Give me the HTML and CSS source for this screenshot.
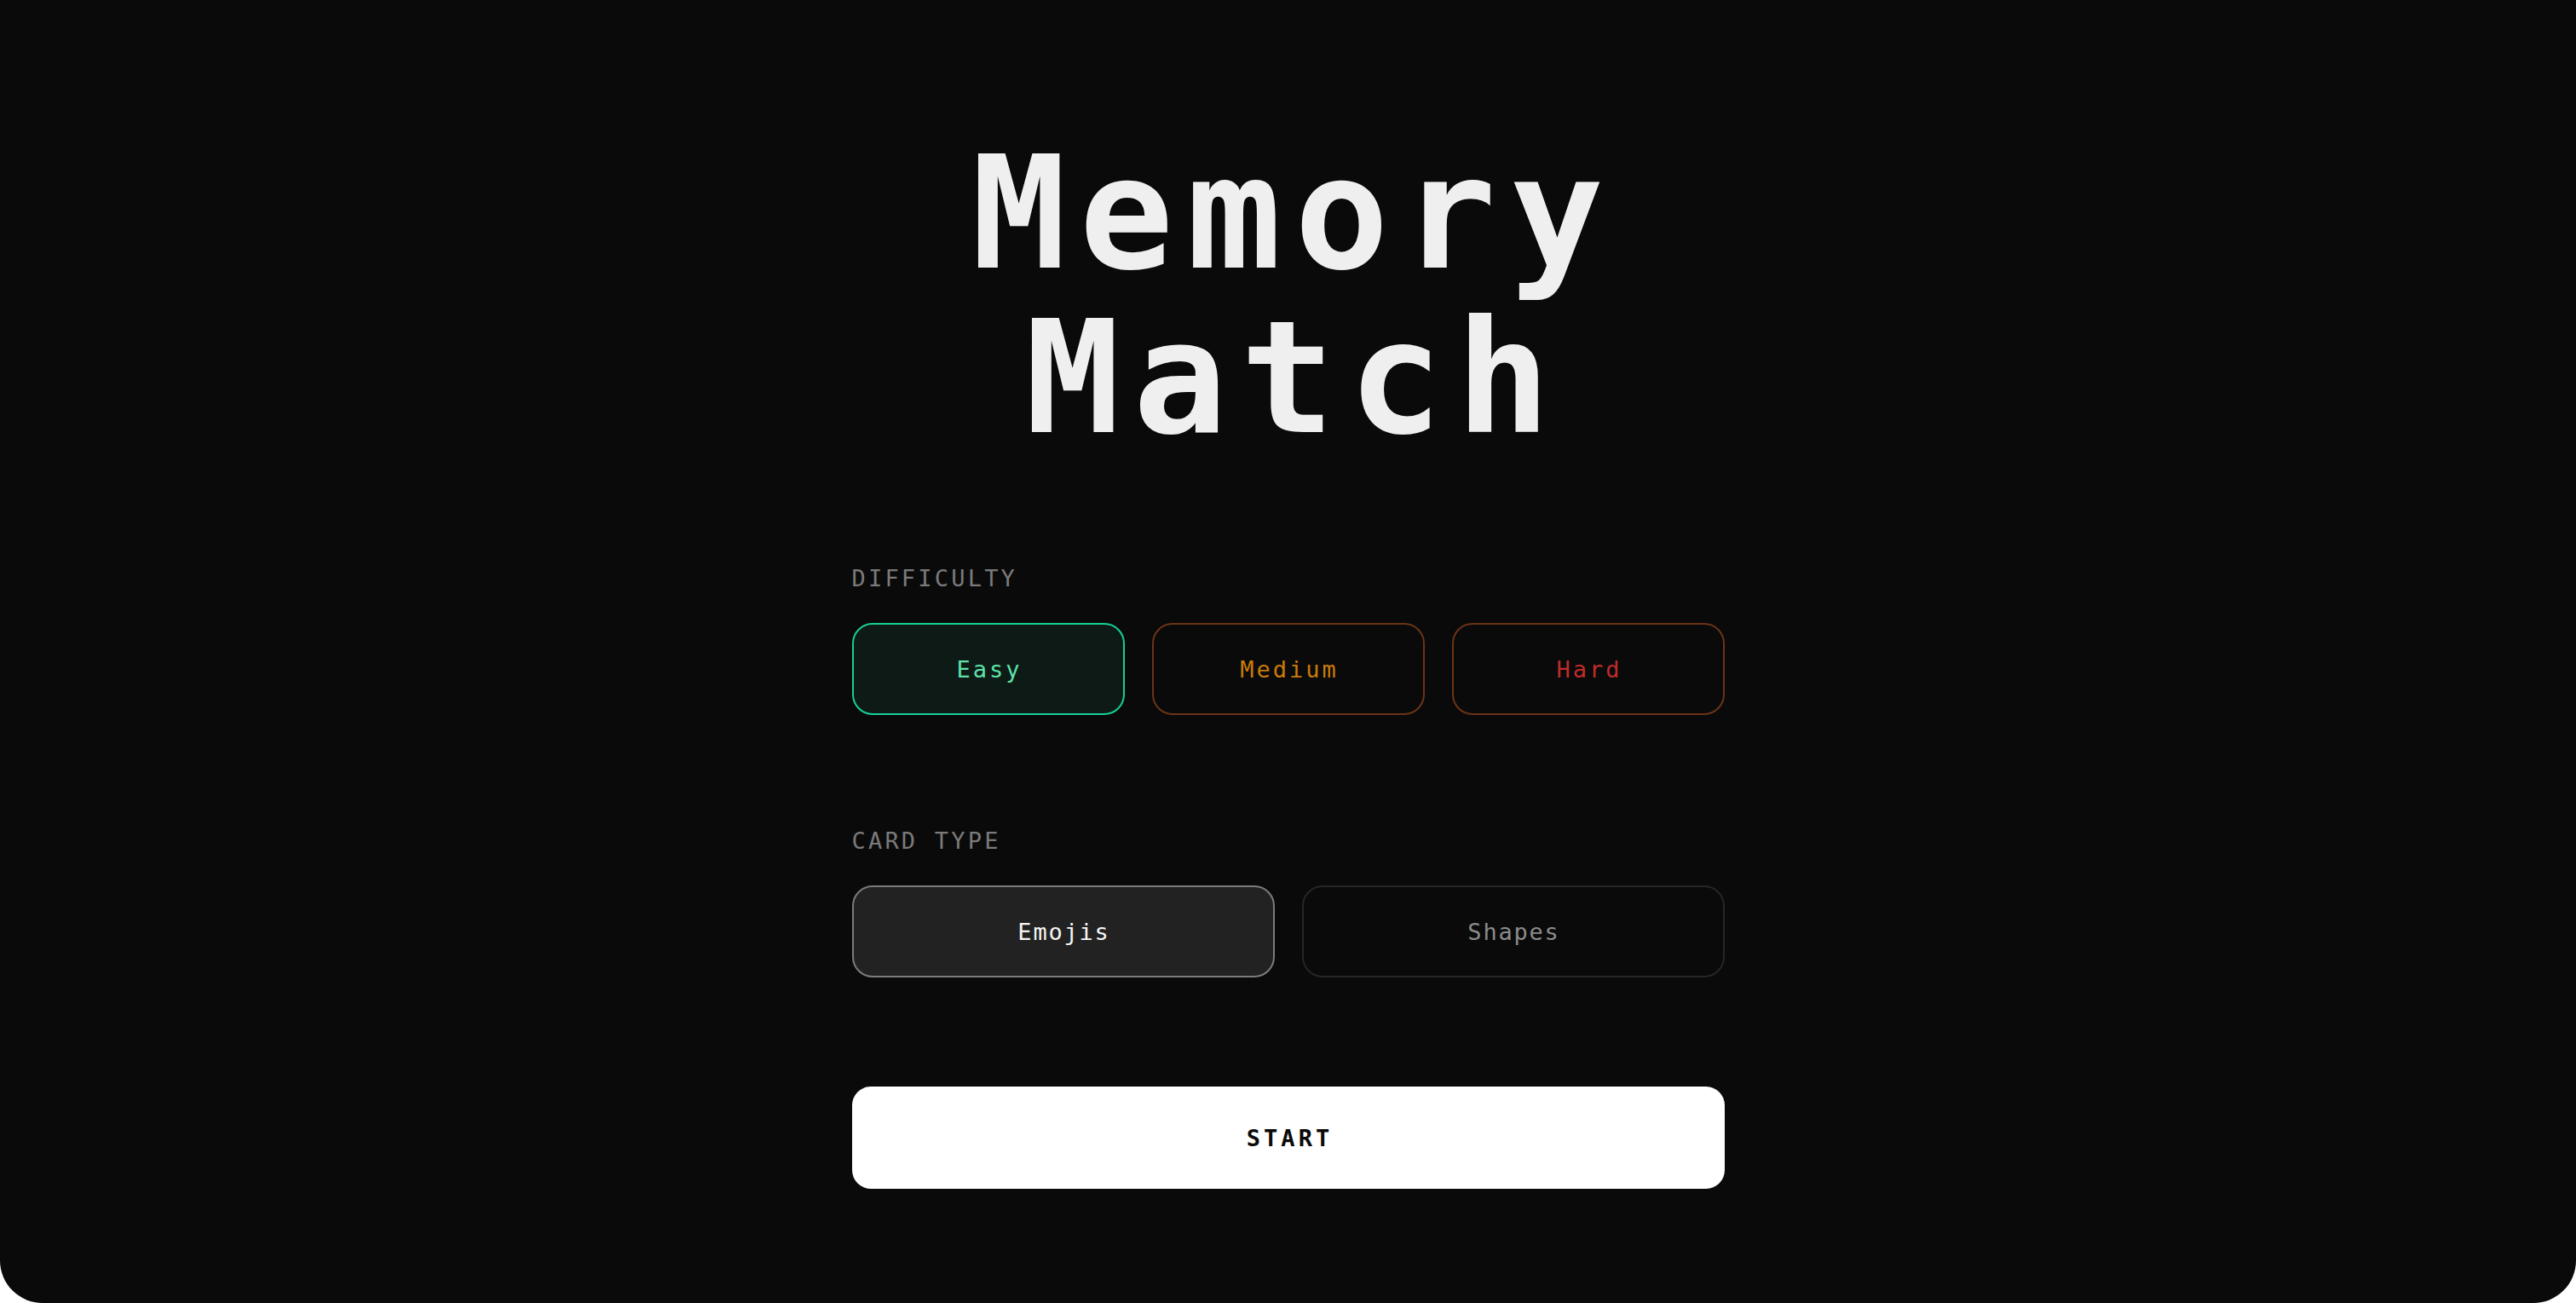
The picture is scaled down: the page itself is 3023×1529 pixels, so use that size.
FILE: index.html
```html
<!DOCTYPE html>
<html lang="en">
<head>
<meta charset="utf-8">
<title>Memory Match</title>
<link rel="stylesheet" href="styles.css">
</head>
<body>
<div class="app">
  <main class="panel">
    <h1 class="title">Memory<br>Match</h1>

    <section class="group">
      <div class="label">DIFFICULTY</div>
      <div class="options three">
        <button class="opt easy">Easy</button>
        <button class="opt medium">Medium</button>
        <button class="opt hard">Hard</button>
      </div>
    </section>

    <section class="group">
      <div class="label">CARD TYPE</div>
      <div class="options two">
        <button class="opt type active">Emojis</button>
        <button class="opt type">Shapes</button>
      </div>
    </section>

    <button class="start">START</button>
  </main>
</div>
</body>
</html>
```

FILE: styles.css
```css
html, body {
  margin: 0;
  padding: 0;
  background: #ffffff;
}

body {
  font-family: "DejaVu Sans Mono", "Liberation Mono", monospace;
}

.app {
  height: 1529px;
  background: #0a0a0a;
  border-radius: 0 0 50px 50px;
  box-sizing: border-box;
  padding-top: 154px;
  display: flex;
  justify-content: center;
}

.panel {
  width: 1024px;
  display: flex;
  flex-direction: column;
}

.title {
  margin: 0 0 119px 0;
  font-size: 184px;
  line-height: 193px;
  font-weight: 700;
  letter-spacing: 15.5px;
  padding-left: 15px;
  color: #efefef;
  text-align: center;
}

.group {
  display: flex;
  flex-direction: column;
  margin-bottom: 128px;
}

.label {
  font-size: 27px;
  line-height: 40px;
  letter-spacing: 3.2px;
  color: #7a7a7a;
  margin-bottom: 32px;
}

.options {
  display: grid;
  gap: 32px;
}

.options.three {
  grid-template-columns: repeat(3, 1fr);
}

.options.two {
  grid-template-columns: repeat(2, 1fr);
}

.opt {
  height: 108px;
  box-sizing: border-box;
  border: 2px solid #262626;
  border-radius: 24px;
  background: #0a0a0a;
  font-family: "DejaVu Sans Mono", "Liberation Mono", monospace;
  font-size: 27px;
  letter-spacing: 3px;
  padding: 0 0 0 3px;
  cursor: pointer;
}

.easy {
  border-color: #16cf96;
  background: #0d1a16;
  color: #5ee2aa;
}

.medium {
  border-color: #6b3417;
  color: #c97b0a;
}

.hard {
  border-color: #6b3417;
  color: #be2c2a;
}

.type {
  letter-spacing: 1.8px;
  padding-left: 2px;
  color: #8b8b8b;
  border-color: #262626;
}

.type.active {
  background: #222222;
  border-color: #7b7b7b;
  color: #f5f5f5;
}

.start {
  height: 120px;
  border: none;
  border-radius: 22px;
  background: #ffffff;
  color: #0a0a0a;
  font-family: "DejaVu Sans Mono", "Liberation Mono", monospace;
  font-size: 27px;
  font-weight: 700;
  letter-spacing: 4px;
  padding: 0 0 0 4px;
  cursor: pointer;
}
```
